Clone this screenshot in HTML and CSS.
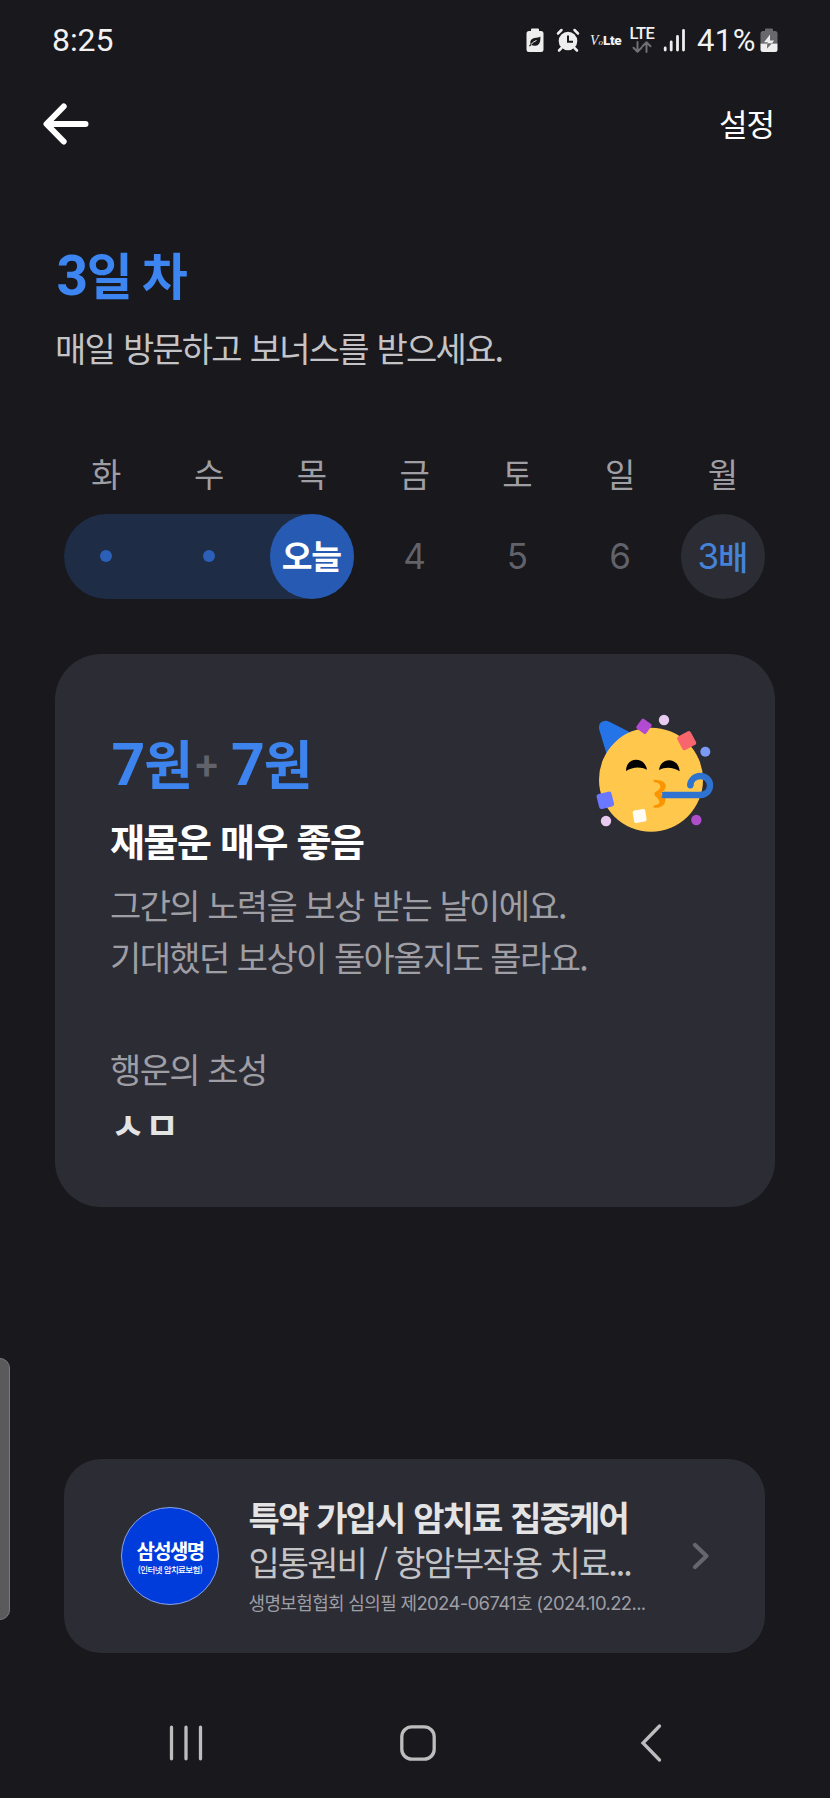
FILE: index.html
```html
<!DOCTYPE html>
<html lang="ko">
<head>
<meta charset="utf-8">
<title>3일 차</title>
<link rel="stylesheet" href="styles.css">
</head>
<body>
<div class="screen">
  <header class="status">
    <span class="clock">8:25</span>
    <div class="indicators">
      <svg class="i-eco" width="18" height="25" viewBox="0 0 18 25"><path fill="#eee" d="M6 .5h6a1 1 0 0 1 1 1V3h2a2.500 2.500 0 0 1 2.500 2.500v16A2.500 2.500 0 0 1 15 24H3a2.500 2.500 0 0 1-2.500-2.500v-16A2.500 2.500 0 0 1 3 3h2V1.500a1 1 0 0 1 1-1z"/><path fill="#18181d" d="M14.300 8.500c.5 5-.8 9-5 9.300-1.600.2-3-.2-3.800-.8l-1.700 1.500-.8-.8 1.600-1.800c-1-3 1-5.700 4-6 2.300-.2 4.200-.2 5.700-1.400z"/><path stroke="#eee" stroke-width="1" fill="none" d="M5 16.500q3-3.500 5.500-4"/></svg>
      <svg class="i-alarm" width="24" height="25" viewBox="0 0 24 25"><circle cx="12" cy="13" r="9.300" fill="#eee"/><path stroke="#eee" stroke-width="2.500" stroke-linecap="round" fill="none" d="M2 5.500 5.500 2M22 5.500 18.500 2M5.500 20 3 22.500M18.500 20l2.500 2.500"/><path stroke="#18181d" stroke-width="2" fill="none" d="M12 7.500v6.300h5"/></svg>
      <span class="volte"><i>V</i><small>o</small><b>Lte</b></span>
      <span class="lte">LTE
        <svg width="20" height="12" viewBox="0 0 20 12"><path stroke="#707074" stroke-width="2" stroke-linecap="round" stroke-linejoin="round" fill="none" d="M5.500 1v9.500M1.500 6.800l4 3.900 4-3.900M14.500 11V1.300M10.500 5.200l4-3.900 4 3.900"/></svg>
      </span>
      <svg class="i-signal" width="23" height="25" viewBox="0 0 23 25"><path stroke="#eee" stroke-width="2.800" stroke-linecap="round" d="M2.200 20v2M8.200 14v8M14.500 8.500V22M20.500 2.300V22"/></svg>
      <span class="percent">41%</span>
      <svg class="i-batt" width="18" height="25" viewBox="0 0 18 25"><path fill="#69696d" d="M6 .5h6a1 1 0 0 1 1 1V3h2a2.500 2.500 0 0 1 2.500 2.500v10H.5v-10A2.500 2.500 0 0 1 3 3h2V1.500a1 1 0 0 1 1-1z"/><path fill="#eee" d="M.5 15.500h17v6A2.500 2.500 0 0 1 15 24H3a2.500 2.500 0 0 1-2.500-2.500z"/><path fill="#eee" d="m10 6.500-6 7.700h4l-1 1.300h5l2-3h-4z"/><path fill="#69696d" d="M7.300 15.400h4.500L7 20.500z"/></svg>
    </div>
  </header>

  <nav class="topbar">
    <svg width="46" height="42" viewBox="0 0 46 42"><path fill="none" stroke="#fff" stroke-width="6" stroke-linecap="round" stroke-linejoin="round" d="M20.700 3.500 3.500 21l17.200 17.500M4 21h38.500"/></svg>
    <span class="settings">설정</span>
  </nav>

  <main>
    <section class="intro">
      <h1 class="title"><span class="num">3</span>일 차</h1>
      <p class="subtitle">매일 방문하고 보너스를 받으세요.</p>
    </section>

    <section class="week">
      <div class="names"><span>화</span><span>수</span><span>목</span><span>금</span><span>토</span><span>일</span><span>월</span></div>
      <div class="days">
        <div class="streak">
          <div class="day"><span class="dot"></span></div>
          <div class="day"><span class="dot"></span></div>
          <div class="day today">오늘</div>
        </div>
        <div class="day">4</div>
        <div class="day">5</div>
        <div class="day">6</div>
        <div class="day bonus"><span class="num">3</span>배</div>
      </div>
    </section>

    <section class="card">
      <div class="card-top">
        <div class="headline">
          <div class="reward"><span class="num">7</span>원<span class="plus">+</span><span class="num">7</span>원</div>
          <h2 class="fortune">재물운 매우 좋음</h2>
        </div>
        <svg class="party" width="120" height="120" viewBox="45 40 360 360">
          <path fill="#2474e8" d="M58 91C52 70 70 57 88 66l68 35-76 62z"/>
          <circle cx="213" cy="240" r="156" fill="#ffc84d"/>
          <path d="M138 214c0-44 57-44 63-4-20-10-44-8-63 4zM237 211c4-40 59-40 62 4-18-12-42-14-62-4z"/>
          <path fill="#fa9500" d="M221 240c30 0 42 12 34 28-3 6-9 10-14 13 9 4 16 12 15 22-2 16-17 23-35 21v-7c10 0 17-4 17-10 0-8-6-14-14-19v-10c8-4 16-9 17-16 1-8-8-14-20-15z"/>
          <path fill="none" stroke="#2e73cf" stroke-width="19" stroke-linejoin="round" d="M251 286h109c18 0 30-12 30-29 0-16-13-28-29-28-17 0-30 13-30 28"/>
          <circle cx="331" cy="257" r="9.500" fill="#2e73cf"/>
          <path fill="#2e73cf" d="m244 278 12-2v20l-12-2q6-8 0-16z"/>
          <rect x="174" y="62" width="36" height="36" rx="5" fill="#b24bd2" transform="rotate(36 192 80)"/>
          <rect x="297" y="100" width="46" height="46" rx="8" fill="#f8656d" transform="rotate(-28 320 123)"/>
          <rect x="53" y="279" width="46" height="46" rx="8" fill="#6a78ff" transform="rotate(-14 76 302)"/>
          <rect x="160" y="330" width="38" height="38" rx="6" fill="#fffdf5" transform="rotate(-9 179 349)"/>
          <circle cx="252" cy="61" r="15.500" fill="#e9cbf2"/>
          <circle cx="376" cy="156" r="15" fill="#7b9af5"/>
          <circle cx="78" cy="364" r="15.500" fill="#e9cbf2"/>
          <circle cx="349" cy="361" r="15.500" fill="#ae4ec9"/>
        </svg>
      </div>
      <p class="desc">그간의 노력을 보상 받는 날이에요.<br>기대했던 보상이 돌아올지도 몰라요.</p>
      <p class="label">행운의 초성</p>
      <p class="initials">ㅅㅁ</p>
    </section>

    <section class="ad">
      <div class="logo"><b>삼성생명</b><span>(인터넷 암치료보험)</span></div>
      <div class="ad-text">
        <p class="ad-title">특약 가입시 암치료 집중케어</p>
        <p class="ad-sub">입통원비 / 항암부작용 치료...</p>
        <p class="ad-note">생명보험협회 심의필 제<span class="lat">2024-06741</span>호 <span class="lat">(2024.10.22...</span></p>
      </div>
      <svg class="chevron" width="18" height="28" viewBox="0 0 18 28"><path fill="none" stroke="#66666e" stroke-width="4.200" stroke-linecap="round" stroke-linejoin="round" d="m3 3 11.500 11L3 25"/></svg>
    </section>
  </main>

  <footer class="navbar">
    <svg width="36" height="40" viewBox="0 0 36 40"><path stroke="#bdbdbd" stroke-width="3.300" stroke-linecap="round" d="M3.500 4.200v31.600M18 4.200v31.600M32.500 4.200v31.600"/></svg>
    <svg class="nav-home" width="36" height="40" viewBox="0 0 36 40"><rect x="1.800" y="3.800" width="32.400" height="32.400" rx="10" fill="none" stroke="#bdbdbd" stroke-width="3.300"/></svg>
    <svg class="nav-back" width="22" height="40" viewBox="0 0 22 40"><path fill="none" stroke="#bdbdbd" stroke-width="3.300" stroke-linecap="round" stroke-linejoin="miter" d="M19.500 3 3 20l16.500 17"/></svg>
  </footer>
  <div class="edge-handle"></div>
</div>
</body>
</html>
```
FILE: styles.css
```css
* { box-sizing: border-box; margin: 0; padding: 0; }
body { background: #18181d; }
.screen {
  position: relative;
  width: 830px;
  height: 1798px;
  overflow: hidden;
  display: flex;
  flex-direction: column;
  background: #18181d;
  color: #fff;
  font-family: "Noto Sans CJK KR", sans-serif;
  white-space: nowrap;
}
svg { display: block; flex: none; }

.status {
  height: 80px;
  padding: 0 52px 0 52px;
  display: flex;
  justify-content: space-between;
  align-items: center;
  font-family: Roboto, sans-serif;
  color: #f2f2f2;
}
.clock { font-size: 32px; letter-spacing: -.1px; }
.indicators { display: flex; align-items: center; }
.i-alarm { margin-left: 12px; }
.volte { margin-left: 10px; width: 33px; display: flex; align-items: baseline; line-height: 18px; padding-top: 2px; }
.volte i { font: italic 14px/18px "Liberation Serif", serif; }
.volte small { font: italic 9px/18px "Liberation Serif", serif; }
.volte b { font: 900 13.5px/18px Roboto, sans-serif; letter-spacing: -.4px; }
.lte { margin-left: 6px; width: 26px; display: flex; flex-direction: column; align-items: center; font-size: 16.5px; font-weight: 500; line-height: 14px; letter-spacing: -.5px; }
.i-signal { margin-left: 8px; }
.percent { margin-left: 11px; width: 60px; font-size: 31px; letter-spacing: .4px; }
.i-batt { margin-left: 3px; }

.topbar { height: 88px; padding: 0 56px 0 43px; display: flex; justify-content: space-between; align-items: center; }
.settings { font-size: 31px; letter-spacing: -1px; line-height: 44px; margin-top: -2px; }

.intro { padding: 75px 55px 0; }
.title { height: 60px; padding-left: 1.5px; color: #3d86f2; font-size: 50px; line-height: 60px; letter-spacing: -2.4px; font-weight: 700; }
.title .num { font-family: Roboto, sans-serif; font-size: 55px; line-height: 0; letter-spacing: -1.4px; }
.subtitle { margin-top: 19.5px; color: #c4c4c7; font-size: 34px; line-height: 50px; letter-spacing: -1.8px; word-spacing: 1.2px; }

.week { padding: 80.5px 64px 0; }
.names { display: flex; gap: 18.2px; height: 40px; font-size: 33px; line-height: 40px; color: #9e9ea4; }
.names span { width: 84.6px; text-align: center; }
.days { margin-top: 21px; display: flex; gap: 18.2px; }
.streak { display: flex; gap: 18.2px; background: #1e2c45; border-radius: 43px; }
.day { width: 84.6px; height: 84.6px; border-radius: 50%; display: flex; align-items: center; justify-content: center; font-family: Inter, sans-serif; font-size: 35px; color: #62626a; }
.dot { width: 12px; height: 12px; border-radius: 50%; background: #2b5fb8; }
.today { background: #275ab2; color: #fff; font: 700 33.5px/40px "Noto Sans CJK KR", sans-serif; letter-spacing: -1.2px; padding: 0 1px 2px 0; }
.bonus { background: #2c2c35; color: #4583d8; font: 500 33px/40px "Noto Sans CJK KR", sans-serif; padding-bottom: 1px; }
.bonus .num { font-family: Inter, sans-serif; font-size: 35px; font-weight: 400; letter-spacing: -1px; }

.card { margin: 55.4px 55.5px 0 55px; height: 553px; border-radius: 46px; background: #2c2c35; padding: 59px 59.5px 0 55px; }
.card-top { display: flex; justify-content: space-between; }
.headline { padding-top: 16px; }
.reward { display: flex; align-items: baseline; height: 66px; padding-left: 1.5px; color: #3d84ee; font-size: 53px; line-height: 66px; font-weight: 700; }
.reward .num { font-family: Roboto, sans-serif; font-size: 59px; letter-spacing: -1px; }
.plus { font-family: Roboto, sans-serif; font-size: 41px; font-weight: 500; color: #62626a; margin: 9px 13px 0 2px; align-self: center; }
.fortune { margin-top: 20px; font-size: 38px; line-height: 50px; font-weight: 700; letter-spacing: -1.5px; word-spacing: .5px; }
.desc { margin-top: 14px; color: #9e9ea4; font-size: 34px; line-height: 52px; letter-spacing: -1.65px; word-spacing: .4px; }
.label { margin-top: 61px; color: #9e9ea4; font-size: 34px; line-height: 50px; letter-spacing: -1.65px; word-spacing: .5px; }
.initials { margin-top: 5px; padding-left: 1px; color: #e4e4e5; font-size: 37px; line-height: 50px; font-weight: 700; }

.ad { margin: 252.5px 65px 0 64px; height: 194px; border-radius: 37px; background: #2c2c35; display: flex; padding: 0 55px 0 57px; align-items: center; }
.logo { width: 98px; height: 98px; border-radius: 50%; border: 1px solid #8ba4e8; background: #003bdc; display: flex; flex-direction: column; align-items: center; padding-top: 31px; flex: none; }
.logo b { font-size: 20px; line-height: 24px; letter-spacing: -1.6px; }
.logo span { font-size: 8.5px; line-height: 13px; letter-spacing: -.6px; font-weight: 500; }
.ad-text { width: 402px; height: 124px; margin-left: 29.5px; }
.ad-title { font-size: 34px; line-height: 46px; font-weight: 700; letter-spacing: -1.9px; word-spacing: 1.3px; color: #e4e4e5; }
.ad-sub { font-size: 34px; line-height: 44px; letter-spacing: -1.95px; word-spacing: 1px; color: #c4c4c7; }
.ad-note { margin-top: 2px; font-size: 18px; line-height: 32px; letter-spacing: -.65px; color: #9e9ea4; }
.lat { font-family: Inter, sans-serif; font-size: 18.5px; line-height: 0; }
.chevron { margin-left: auto; }

.navbar { margin-top: 70px; height: 40px; padding-left: 168px; display: flex; align-items: center; }
.nav-home { margin-left: 196px; }
.nav-back { margin-left: 204px; }
.edge-handle { position: absolute; left: -14px; top: 1358px; width: 24px; height: 262px; border-radius: 10px; background: #5a5a5d; border: 1.5px solid #7a7a7c; }
```
